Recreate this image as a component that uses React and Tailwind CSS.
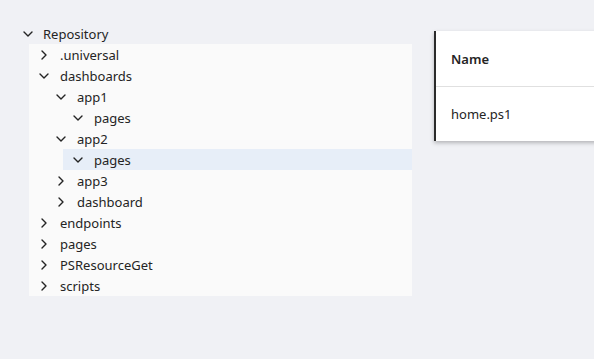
import React from 'react';

const Chevron = ({ open }) => (
  <svg width="16" height="16" viewBox="0 0 16 16" fill="none" stroke="#242424" strokeWidth="1.4" strokeLinecap="round" strokeLinejoin="round">
    {open ? <path d="M4 6l4 4 4-4" /> : <path d="M6 4l4 4-4 4" />}
  </svg>
);

const rows = [
  { label: '.universal', level: 1, open: false },
  { label: 'dashboards', level: 1, open: true },
  { label: 'app1', level: 2, open: true },
  { label: 'pages', level: 3, open: true },
  { label: 'app2', level: 2, open: true },
  { label: 'pages', level: 3, open: true, selected: true },
  { label: 'app3', level: 2, open: false },
  { label: 'dashboard', level: 2, open: false },
  { label: 'endpoints', level: 1, open: false },
  { label: 'pages', level: 1, open: false },
  { label: 'PSResourceGet', level: 1, open: false },
  { label: 'scripts', level: 1, open: false },
];

const indent = ['ml-0', 'ml-0', 'ml-[17px]', 'ml-[34px]'];

export default function App() {
  return (
    <div
      className="w-[594px] h-[359px] overflow-hidden bg-[#f0f1f5] flex text-[13px] text-[#242424]"
      style={{ fontFamily: '"Noto Sans", "Open Sans", sans-serif' }}
    >
      <div className="pt-[23px] pl-5 w-[412px] shrink-0">
        <div className="flex items-center h-[21px]">
          <span className="w-4 flex justify-center"><Chevron open /></span>
          <span className="ml-[7px] leading-none pt-px">Repository</span>
        </div>
        <div className="ml-[9px] bg-[#fafafa]">
          {rows.map((r, i) => (
            <div
              key={i}
              className={`flex items-center h-[21px] pl-[7px] ${indent[r.level]} ${r.selected ? 'bg-[#e7eef8]' : ''}`}
            >
              <span className="w-4 flex justify-center"><Chevron open={r.open} /></span>
              <span className="ml-2 leading-none pt-px">{r.label}</span>
            </div>
          ))}
        </div>
      </div>
      <div className="ml-[22px] mt-[31px] w-[300px] h-[110px] shrink-0 bg-white border-l-2 border-[#2b2b2b] shadow-[0_2px_4px_rgba(0,0,0,0.25)]">
        <div className="h-[56px] flex items-center pl-[15px] pt-[2px] border-b border-[#e0e0e0] font-semibold">Name</div>
        <div className="h-[53px] flex items-center pl-[15px] pt-[2px]">home.ps1</div>
      </div>
    </div>
  );
}
